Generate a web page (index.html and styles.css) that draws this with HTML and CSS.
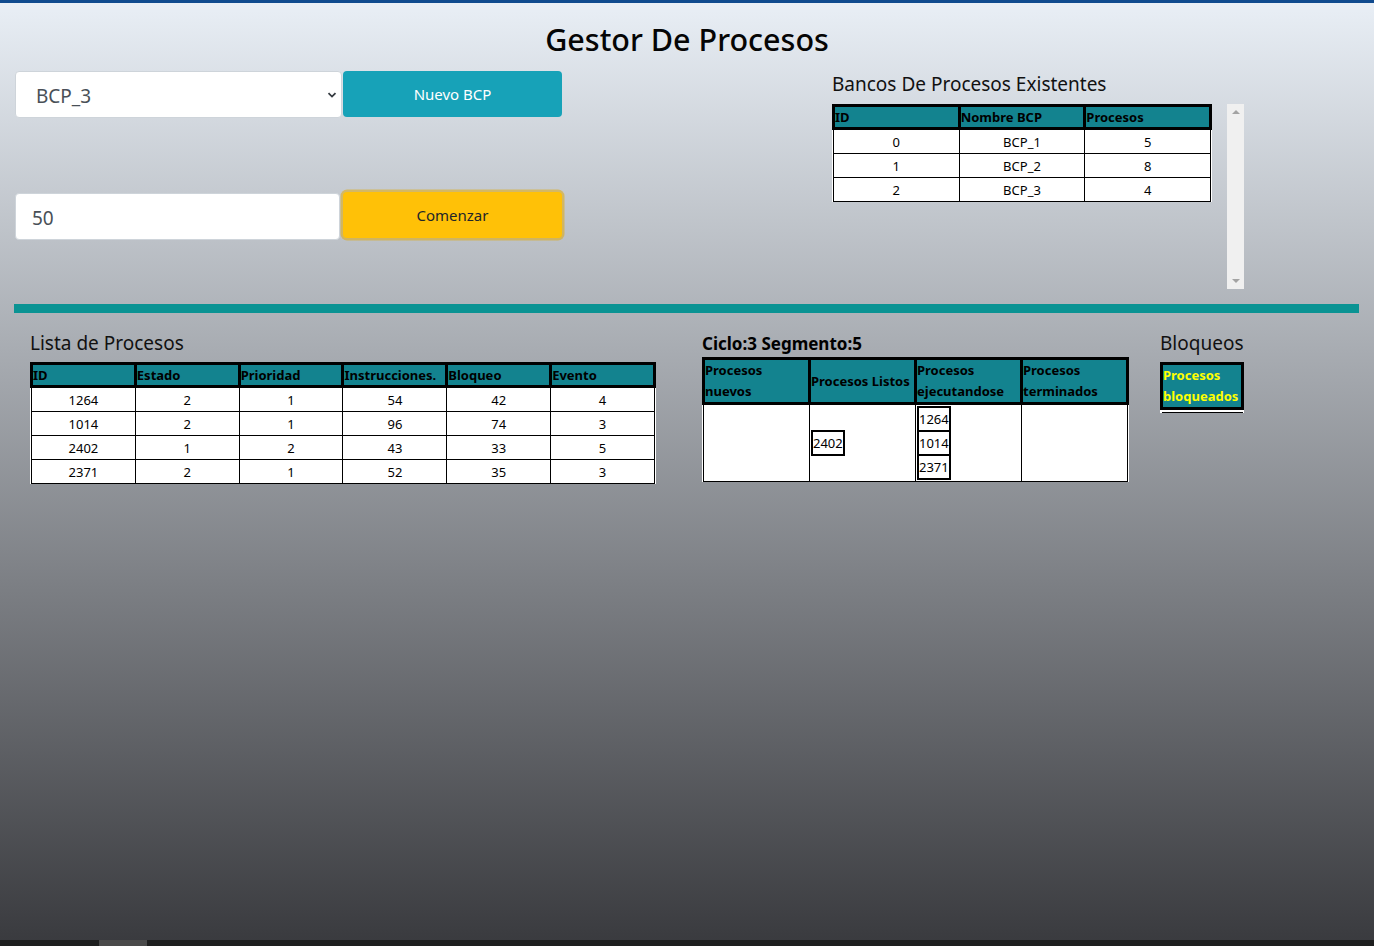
FILE: index.html
```html
<!DOCTYPE html>
<html lang="es">
<head>
<meta charset="utf-8">
<title>Gestor De Procesos</title>
<link rel="stylesheet" href="styles.css">
</head>
<body>
<div class="topline"></div>
<h1 class="title">Gestor De Procesos</h1>
<div class="top">
  <div class="controls">
    <div class="ctrl-row">
      <div class="select"><span>BCP_3</span>
        <svg class="chev" width="10" height="8" viewBox="0 0 10 8"><path d="M1.5 2.2 L5 5.6 L8.5 2.2" fill="none" stroke="#343a40" stroke-width="1.8"/></svg>
      </div>
      <button class="btn btn-info">Nuevo BCP</button>
    </div>
    <div class="ctrl-row second">
      <div class="input">50</div>
      <button class="btn btn-warn">Comenzar</button>
    </div>
  </div>
  <div class="banks">
    <h2 class="sub">Bancos De Procesos Existentes</h2>
    <div class="bank-body">
      <table class="grid bank">
        <thead><tr><th>ID</th><th>Nombre BCP</th><th>Procesos</th></tr></thead>
        <tbody>
          <tr><td>0</td><td>BCP_1</td><td>5</td></tr>
          <tr><td>1</td><td>BCP_2</td><td>8</td></tr>
          <tr><td>2</td><td>BCP_3</td><td>4</td></tr>
        </tbody>
      </table>
      <div class="scrollbar"><span class="arr up"></span><span class="arr down"></span></div>
    </div>
  </div>
</div>
<div class="divider"></div>
<div class="bottom">
  <div class="col lista">
    <h2 class="sub">Lista de Procesos</h2>
    <table class="grid procs">
      <thead><tr><th>ID</th><th>Estado</th><th>Prioridad</th><th>Instrucciones.</th><th>Bloqueo</th><th>Evento</th></tr></thead>
      <tbody>
        <tr><td>1264</td><td>2</td><td>1</td><td>54</td><td>42</td><td>4</td></tr>
        <tr><td>1014</td><td>2</td><td>1</td><td>96</td><td>74</td><td>3</td></tr>
        <tr><td>2402</td><td>1</td><td>2</td><td>43</td><td>33</td><td>5</td></tr>
        <tr><td>2371</td><td>2</td><td>1</td><td>52</td><td>35</td><td>3</td></tr>
      </tbody>
    </table>
  </div>
  <div class="col ciclo">
    <h3 class="cyc">Ciclo:3 Segmento:5</h3>
    <table class="grid states">
      <thead><tr><th>Procesos nuevos</th><th>Procesos Listos</th><th>Procesos ejecutandose</th><th>Procesos terminados</th></tr></thead>
      <tbody>
        <tr>
          <td></td>
          <td><table class="mini"><tr><td>2402</td></tr></table></td>
          <td><table class="mini"><tr><td>1264</td></tr><tr><td>1014</td></tr><tr><td>2371</td></tr></table></td>
          <td></td>
        </tr>
      </tbody>
    </table>
  </div>
  <div class="col bloq">
    <h2 class="sub">Bloqueos</h2>
    <table class="grid blocked">
      <thead><tr><th>Procesos bloqueados</th></tr></thead>
      <tbody><tr><td></td></tr></tbody>
    </table>
  </div>
</div>
<div class="taskbar"><span class="tb-item"></span></div>
</body>
</html>
```
FILE: styles.css
```css
html, body {
  margin: 0;
  padding: 0;
  height: 100%;
}
body {
  font-family: "Noto Sans", "Open Sans", sans-serif;
  color: #000;
  background: linear-gradient(to bottom, #e9eff6 0px, #3a3b3f 940px);
  display: flex;
  flex-direction: column;
  min-height: 100vh;
}
.topline {
  height: 3px;
  background: #0f4a8e;
}
.title {
  margin: 17px 0 0 0;
  font-size: 30.5px;
  font-weight: 500;
  line-height: 38px;
  text-align: center;
  color: #050505;
}
.top {
  display: flex;
  padding-left: 15px;
  margin-top: 13px;
  height: 233px;
}
.controls {
  width: 560px;
}
.ctrl-row {
  display: flex;
  align-items: flex-start;
}
.ctrl-row.second {
  margin-top: 74px;
}
.select {
  width: 327px;
  height: 47px;
  box-sizing: border-box;
  background: #fff;
  border: 1px solid #ced4da;
  border-radius: 4px;
  display: flex;
  align-items: center;
  justify-content: space-between;
  padding: 2px 4px 0 20px;
  font-size: 19px;
  color: #495057;
}
.chev { margin-top: -2px; }
.btn {
  border: none;
  border-radius: 4px;
  font-family: inherit;
  font-size: 15px;
  height: 46px;
  width: 219px;
  padding: 0;
  cursor: pointer;
}
.btn-info {
  background: #17a2b8;
  color: #fff;
  margin-left: 1px;
}
.btn-warn {
  background: #ffc107;
  color: #212529;
  margin-left: 3px;
  box-shadow: 0 0 0 2.5px rgba(222, 170, 12, 0.55);
}
.input {
  width: 325px;
  height: 47px;
  margin-top: 1px;
  box-sizing: border-box;
  background: #fff;
  border: 1px solid #ced4da;
  border-radius: 4px;
  display: flex;
  align-items: center;
  padding: 2px 0 0 16px;
  font-size: 19px;
  color: #495057;
}
.banks {
  margin-left: 257px;
}
.sub {
  font-size: 19px;
  font-weight: 400;
  line-height: 24px;
  margin: 0;
  color: #111;
}
.banks .sub { margin-top: 1px; }
.bank-body {
  display: flex;
  margin-top: 8px;
  align-items: flex-start;
}
.scrollbar {
  position: relative;
  width: 17px;
  height: 185px;
  background: #f0f0f0;
  margin-left: 15px;
}
.arr {
  position: absolute;
  left: 5px;
  width: 0;
  height: 0;
  border-left: 4px solid transparent;
  border-right: 4px solid transparent;
}
.arr.up { top: 6px; border-bottom: 4px solid #a3a3a3; }
.arr.down { bottom: 6px; border-top: 4px solid #a3a3a3; }

.grid {
  border-collapse: collapse;
  background: #fff;
  font-size: 13px;
}
.grid th {
  background: #13838f;
  border: 3px solid #000;
  text-align: left;
  font-weight: 700;
  padding: 0;
  height: 20px;
  line-height: 18px;
  vertical-align: middle;
}
.grid td {
  border: 1px solid #000;
  text-align: center;
  height: 23px;
  padding: 0;
  line-height: 18px;
}
.bank { width: 380px; table-layout: fixed; }
.divider {
  height: 9px;
  background: #0a9393;
  margin: 0 15px 0 14px;
}
.bottom {
  display: flex;
  align-items: flex-start;
  padding-left: 30px;
  margin-top: 18px;
}
.lista { width: 626px; }
.procs { width: 626px; table-layout: fixed; margin-top: 7px; }
.ciclo { margin-left: 46px; width: 427px; }
.cyc {
  margin: 2px 0 0 0;
  font-size: 17px;
  font-weight: 700;
  line-height: 22px;
}
.states { width: 427px; table-layout: fixed; margin-top: 2px; }
.states th {
  height: 42px;
  line-height: 21px;
  padding-left: 0;
}
.states > tbody > tr > td {
  height: 76px;
  text-align: left;
  vertical-align: middle;
  padding: 0 0 0 1px;
}
.mini {
  border-collapse: separate;
  border-spacing: 0;
  border: 1px solid #000;
  background: #fff;
  font-size: 13px;
}
.mini td {
  border: 1px solid #000 !important;
  height: 22px !important;
  padding: 0 !important;
  line-height: 22px;
  text-align: left !important;
}
.bloq { margin-left: 31px; }
.blocked { width: 84px; margin-top: 7px; }
.blocked th {
  color: #ffff00;
  line-height: 21px;
  height: 40px;
  padding: 0;
}
.blocked td { height: 2px; border-left: none; border-right: none; border-top: 2px solid #fff; }
.taskbar {
  margin-top: auto;
  height: 6px;
  background: #1e1f1f;
}
.tb-item {
  display: block;
  margin-left: 99px;
  width: 48px;
  height: 6px;
  background: #4a4a4a;
}
```
